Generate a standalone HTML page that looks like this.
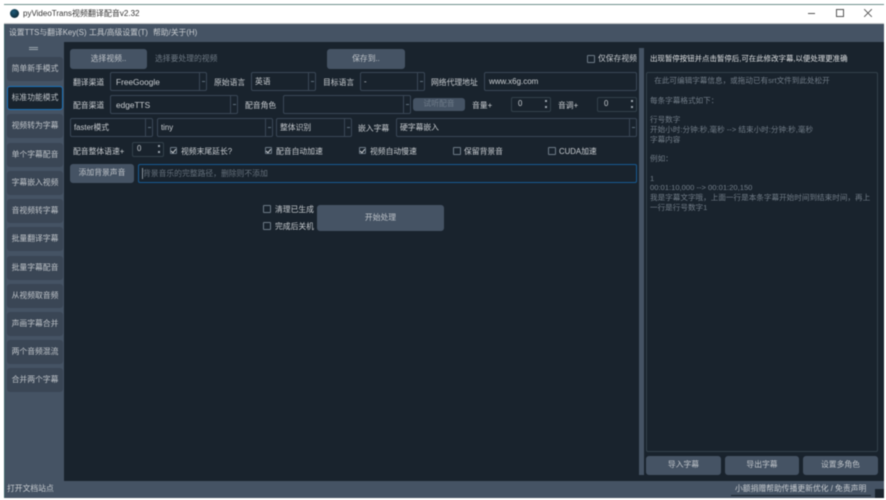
<!DOCTYPE html>
<html><head><meta charset="utf-8">
<style>
html,body{margin:0;padding:0;width:886px;height:500px;overflow:hidden;background:#fff}
body{position:relative;font-family:"Liberation Sans","Noto Sans CJK SC",sans-serif;font-size:7.8px;color:#c9cdd1}
div,span{position:absolute;box-sizing:border-box;white-space:nowrap}
#all{left:0;top:0;width:886px;height:500px;filter:blur(.45px)}
.t{line-height:12px;height:12px}
.l{margin-top:1px}
.btn{background:#455364;border-radius:3px;text-align:center;color:#c0c5ca}
.cb{border:1px solid #3a4757;border-radius:2px;height:19px;background:#19232d;line-height:18px;padding-left:5px}
.cb:after{content:"";position:absolute;right:6px;top:0;bottom:0;width:1px;background:#3a4757}
.cb:before{content:"";position:absolute;right:1.5px;top:8px;width:3px;height:1px;background:#5f6f7e}
.noa:after,.noa:before{display:none}
.sp{border:1px solid #32414b;border-radius:2px;height:15px;line-height:11px;padding-left:6px;background:#19232d}
.sp:after{content:"";position:absolute;right:3px;top:2px;width:2px;height:2px;background:#9aa5ad;box-shadow:0 6px 0 #9aa5ad}
.c{width:7px;height:7px;border:1px solid #6d7a86;border-radius:1px}
.k:after{content:"";position:absolute;left:1px;top:0;width:2px;height:4px;border:solid #c8ccd0;border-width:0 1px 1px 0;transform:rotate(40deg)}
.s{left:7px;width:56px;height:24px;background:#3a4655;border-radius:3px;text-align:center;line-height:24px;color:#c0c5ca;font-size:7.8px}
</style></head><body>
<div id="all">
<div style="left:4px;top:4px;width:880px;height:1px;background:#6f8f8c"></div>
<div style="left:4px;top:5px;width:880px;height:19px;background:#fff"></div>
<div style="left:4px;top:23px;width:880px;height:1px;background:#c9c9c9"></div>
<div style="left:10px;top:9px;width:9px;height:9px;border-radius:50%;background:radial-gradient(circle at 40% 35%,#1d5a78,#0a1a22)"></div>
<div class="t" style="left:23px;top:8px;color:#333;font-size:8px">pyVideoTrans视频翻译配音v2.32</div>
<div style="left:808px;top:13px;width:7px;height:1px;background:#555"></div>
<div style="left:836px;top:9px;width:8px;height:8px;border:1px solid #555"></div>
<svg style="position:absolute;left:864px;top:9px" width="8" height="8"><path d="M0 0L8 8M8 0L0 8" stroke="#555" stroke-width=".9"/></svg>

<div style="left:5px;top:24px;width:879px;height:18px;background:#455364"></div>
<div class="t" style="left:9px;top:27px">设置TTS与翻译Key(S)</div>
<div class="t" style="left:89px;top:27px">工具/高级设置(T)</div>
<div class="t" style="left:153px;top:27px">帮助/关于(H)</div>

<div style="left:4px;top:42px;width:880px;height:456px;background:#19232d"></div>
<div style="left:4px;top:24px;width:1px;height:474px;background:#3c6468"></div>
<div style="left:5px;top:42px;width:59px;height:439px;background:#455364"></div>
<div style="left:29px;top:47px;width:9px;height:3px;border-top:1px solid #9aa5ad;border-bottom:1px solid #9aa5ad"></div>
<div class="s" style="top:57px">简单新手模式</div>
<div class="s" style="top:86px;background:#19232d;border:1px solid #1a72bb;line-height:22px">标准功能模式</div>
<div class="s" style="top:114px">视频转为字幕</div>
<div class="s" style="top:143px">单个字幕配音</div>
<div class="s" style="top:171px">字幕嵌入视频</div>
<div class="s" style="top:199px">音视频转字幕</div>
<div class="s" style="top:227px">批量翻译字幕</div>
<div class="s" style="top:256px">批量字幕配音</div>
<div class="s" style="top:284px">从视频取音频</div>
<div class="s" style="top:312px">声画字幕合并</div>
<div class="s" style="top:340px">两个音频混流</div>
<div class="s" style="top:368px">合并两个字幕</div>

<div class="btn" style="left:70px;top:49px;width:77px;height:20px;line-height:19px">选择视频..</div>
<div class="t" style="left:155px;top:53px;color:#6f7a85">选择要处理的视频</div>
<div class="btn" style="left:327px;top:49px;width:78px;height:20px;line-height:19px">保存到..</div>
<div class="c" style="left:587px;top:55px;width:8px;height:8px"></div>
<div class="t" style="left:598px;top:53px">仅保存视频</div>

<div class="t l" style="left:73px;top:76px">翻译渠道</div>
<div class="cb" style="left:110px;top:72px;width:97px;font-size:8.3px">FreeGoogle</div>
<div class="t l" style="left:214px;top:76px">原始语言</div>
<div class="cb" style="left:251px;top:72px;width:65px;padding-left:3px">英语</div>
<div class="t l" style="left:323px;top:76px">目标语言</div>
<div class="cb" style="left:360px;top:72px;width:65px;padding-left:3px">-</div>
<div class="t l" style="left:431px;top:76px">网络代理地址</div>
<div class="cb noa" style="left:484px;top:72px;width:153px;font-size:8px;padding-left:4px">www.x6g.com</div>

<div class="t l" style="left:73px;top:99px">配音渠道</div>
<div class="cb" style="left:110px;top:95px;width:128px;font-size:8.3px">edgeTTS</div>
<div class="t l" style="left:245px;top:99px">配音角色</div>
<div class="cb" style="left:283px;top:95px;width:128px"></div>
<div class="btn" style="left:413px;top:98px;width:52px;height:13px;line-height:12px;color:#6f7c8a">试听配音</div>
<div class="t l" style="left:472px;top:99px">音量+</div>
<div class="sp" style="left:511px;top:97px;width:40px">0</div>
<div class="t l" style="left:558px;top:99px">音调+</div>
<div class="sp" style="left:597px;top:97px;width:40px">0</div>

<div class="cb" style="left:70px;top:118px;width:83px;padding-left:3px">faster模式</div>
<div class="cb" style="left:157px;top:118px;width:116px;padding-left:3px">tiny</div>
<div class="cb" style="left:276px;top:118px;width:76px;padding-left:3px">整体识别</div>
<div class="t l" style="left:358px;top:122px">嵌入字幕</div>
<div class="cb" style="left:396px;top:118px;width:241px;padding-left:3px">硬字幕嵌入</div>

<div class="t l" style="left:73px;top:145px">配音整体语速+</div>
<div class="sp" style="left:132px;top:142px;width:32px;padding-left:4px">0</div>
<div class="c k" style="left:170px;top:147px"></div><div class="t l" style="left:181px;top:145px">视频末尾延长?</div>
<div class="c k" style="left:265px;top:147px"></div><div class="t l" style="left:276px;top:145px">配音自动加速</div>
<div class="c k" style="left:359px;top:147px"></div><div class="t l" style="left:370px;top:145px">视频自动慢速</div>
<div class="c" style="left:453px;top:147px;width:8px;height:8px"></div><div class="t l" style="left:464px;top:145px">保留背景音</div>
<div class="c" style="left:548px;top:147px;width:8px;height:8px"></div><div class="t l" style="left:559px;top:145px">CUDA加速</div>

<div class="btn" style="left:70px;top:164px;width:64px;height:19px;line-height:18px">添加背景声音</div>
<div style="left:138px;top:164px;width:499px;height:19px;border:1px solid #175a92;border-radius:2px;line-height:17px;padding-left:4px;color:#66717c"><span style="left:3px;top:3px;width:1px;height:11px;background:#8b949c"></span>背景音乐的完整路径，删除则不添加</div>

<div class="c" style="left:263px;top:205px;width:8px;height:8px"></div><div class="t" style="left:275px;top:204px">清理已生成</div>
<div class="c" style="left:263px;top:222px;width:8px;height:8px"></div><div class="t" style="left:275px;top:221px">完成后关机</div>
<div class="btn" style="left:317px;top:205px;width:127px;height:26px;line-height:25px">开始处理</div>

<div style="left:639px;top:48px;width:5px;height:427px;background:#455364"></div>
<div class="t" style="left:650px;top:53px;color:#dfe1e3;font-size:7.45px">出现暂停按钮并点击暂停后,可在此修改字幕,以便处理更准确</div>
<div style="left:646px;top:72px;width:232px;height:380px;border:1px solid #32414b;border-radius:2px;color:#727d88;font-size:7.6px;line-height:9.75px"><div style="left:3px;top:3px;white-space:pre-wrap;width:226px">  在此可编辑字幕信息，或拖动已有srt文件到此处松开

每条字幕格式如下：

行号数字
开始小时:分钟:秒,毫秒 --&gt; 结束小时:分钟:秒,毫秒
字幕内容

例如：

1
00:01:10,000 --&gt; 00:01:20,150
我是字幕文字哦，上面一行是本条字幕开始时间到结束时间，再上
一行是行号数字1</div></div>
<div class="btn" style="left:646px;top:456px;width:75px;height:19px;line-height:18px">导入字幕</div>
<div class="btn" style="left:725px;top:456px;width:74px;height:19px;line-height:18px">导出字幕</div>
<div class="btn" style="left:803px;top:456px;width:75px;height:19px;line-height:18px">设置多角色</div>

<div style="left:5px;top:481px;width:879px;height:17px;background:#455364"></div>
<div class="t" style="left:7px;top:483px">打开文档站点</div>
<div class="t" style="left:735px;top:483px">小额捐赠帮助传播更新优化 / 免责声明</div>
<div style="left:731px;top:495px;width:140px;height:1px;background:#19232d"></div>
<div style="left:875px;top:489px;width:9px;height:9px;background:#19232d"></div>
</div>
</body></html>
